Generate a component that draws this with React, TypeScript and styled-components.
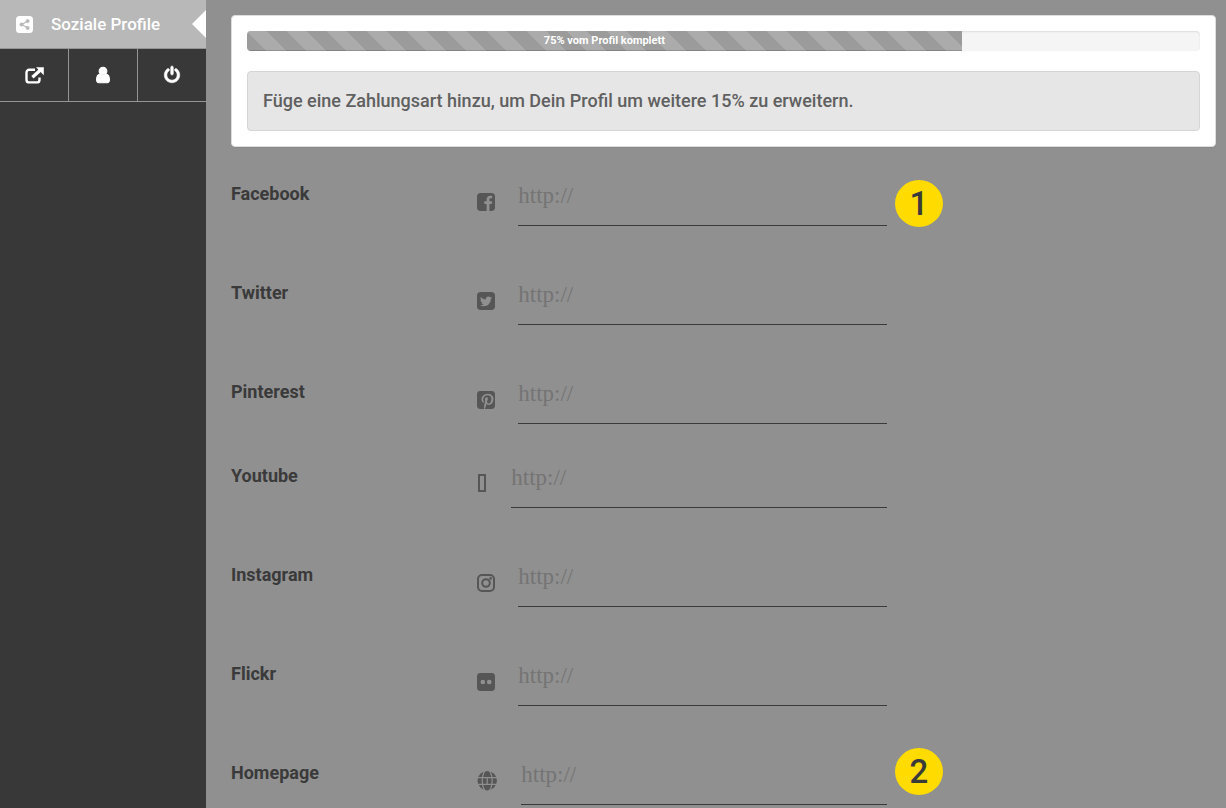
import React from "react";
import styled, { createGlobalStyle } from "styled-components";
import { FaPinterestP } from "react-icons/fa";

const GlobalStyle = createGlobalStyle`
  *, *::before, *::after { box-sizing: border-box; }
  body {
    margin: 0;
    background: #909090;
    font-family: Roboto, "Liberation Sans", sans-serif;
    color: #3a3a3a;
  }
`;

const Page = styled.div`
  display: flex;
  min-height: 100vh;
`;

const Sidebar = styled.aside`
  flex: 0 0 206px;
  background: #383838;
`;

const CurrentLink = styled.a`
  position: relative;
  display: flex;
  align-items: center;
  gap: 18px;
  height: 48px;
  padding: 0 16px;
  background: #b8b8b8;
  color: #fff;
  font-size: 17px;
  font-weight: 500;
  line-height: 24px;
  text-decoration: none;

  &::after {
    content: "";
    position: absolute;
    top: 10px;
    right: 0;
    border: solid transparent;
    border-width: 14px 14px 14px 0;
    border-right-color: #fff;
  }
`;

const Tools = styled.nav`
  display: flex;
  border: solid #959595;
  border-width: 1px 0;
`;

const Tool = styled.button`
  display: flex;
  flex: 1;
  align-items: center;
  justify-content: center;
  height: 52px;
  padding: 0;
  border: 0;
  background: none;
  color: #fff;
  cursor: pointer;

  &:not(:last-child) {
    border-right: 1px solid #959595;
  }
`;

const Main = styled.main`
  flex: 1;
  min-width: 0;
  padding: 15px 10px 3px 25px;
`;

const Card = styled.section`
  padding: 15px;
  margin-bottom: 30px;
  border: 1px solid #ddd;
  border-radius: 4px;
  background: #fff;
  box-shadow: 0 1px 1px rgba(0, 0, 0, 0.05);
`;

const Track = styled.div`
  height: 20px;
  margin-bottom: 20px;
  overflow: hidden;
  border-radius: 4px;
  background: #f5f5f5;
  box-shadow: inset 0 1px 2px rgba(0, 0, 0, 0.1);
`;

const Bar = styled.div`
  height: 100%;
  background-color: #9b9b9b;
  background-image: linear-gradient(
    45deg,
    rgba(255, 255, 255, 0.16) 25%,
    transparent 25%,
    transparent 50%,
    rgba(255, 255, 255, 0.16) 50%,
    rgba(255, 255, 255, 0.16) 75%,
    transparent 75%,
    transparent
  );
  background-size: 40px 40px;
  box-shadow: inset 0 -1px 0 rgba(0, 0, 0, 0.15);
  color: #fff;
  font-size: 11px;
  font-weight: 700;
  line-height: 20px;
  text-align: center;
`;

const Notice = styled.p`
  margin: 0;
  padding: 17px 15px;
  border: 1px solid #d5d5d5;
  border-radius: 4px;
  background: #e6e6e6;
  color: #606060;
  font-size: 18px;
  font-weight: 500;
  line-height: 24px;
`;

const Row = styled.div<{ $tight?: boolean }>`
  display: grid;
  grid-template-columns: 25% 41.6% 1fr;
  margin-bottom: ${(p) => (p.$tight ? 35 : 50)}px;

  &:last-child {
    margin-bottom: 0;
  }
`;

const Label = styled.label`
  padding-top: 5px;
  font-size: 18px;
  font-weight: 700;
  line-height: 24px;
`;

const Field = styled.div`
  position: relative;
  display: flex;
  gap: 23px;
`;

const IconSlot = styled.span`
  display: flex;
  flex: none;
  align-items: center;
  color: #565656;
`;

const UrlInput = styled.input`
  flex: 1;
  min-width: 0;
  height: 49px;
  padding: 0 0 10px;
  border: 0;
  border-bottom: 1px solid #3a3a3a;
  outline: 0;
  background: transparent;
  color: #3a3a3a;
  font: 23px/28px "Liberation Serif", serif;

  &::placeholder {
    color: #747474;
    opacity: 1;
  }
`;

const Badge = styled.span<{ $raised?: boolean }>`
  position: absolute;
  top: ${(p) => (p.$raised ? -8 : 3)}px;
  left: calc(100% + 8px);
  width: 48px;
  height: 47px;
  border-radius: 50%;
  background: #ffdb00;
  color: #3a3a3a;
  font-size: 33px;
  font-weight: 500;
  line-height: 48px;
  text-align: center;
`;

const Glyph = ({ d, size = 20, bold = 0 }: { d: string; size?: number; bold?: number }) => (
  <svg
    width={size}
    height={size}
    viewBox="0 0 1792 1792"
    fill="currentColor"
    stroke="currentColor"
    strokeWidth={bold}
    overflow="visible"
    aria-hidden="true"
  >
    <path d={d} />
  </svg>
);

const USER =
  "M1536 1399q0 109-62.5 187t-150.5 78h-854q-88 0-150.5-78t-62.5-187q0-85 8.5-160.5t31.5-152 58.5-131 94-89 134.5-34.5q131 128 313 128t313-128q76 0 134.5 34.5t94 89 58.5 131 31.5 152 8.5 160.5zM1280 512q0 159-112.5 271.5t-271.5 112.5-271.5-112.5-112.5-271.5 112.5-271.5 271.5-112.5 271.5 112.5 112.5 271.5z";
const POWER =
  "M1664 896q0 156-61 298t-164 245-245 164-298 61-298-61-245-164-164-245-61-298q0-182 80.5-343t226.5-270q43-32 95.5-25t83.5 50q32 42 24.5 94.5t-49.5 84.5q-98 74-151.5 181t-53.5 228q0 104 40.5 198.5t109.5 163.5 163.5 109.5 198.5 40.5 198.5-40.5 163.5-109.5 109.5-163.5 40.5-198.5q0-121-53.5-228t-151.5-181q-42-32-49.5-84.5t24.5-94.5q31-43 84-50t95 25q146 109 226.5 270t80.5 343zM1024 128v640q0 52-38 90t-90 38-90-38-38-90v-640q0-52 38-90t90-38 90 38 38 90z";
const FACEBOOK =
  "M1376 128q119 0 203.5 84.5t84.5 203.5v960q0 119-84.5 203.5t-203.5 84.5h-188v-595h199l30-232h-229v-148q0-56 23.5-84t91.5-28l122-1v-207q-63-9-178-9-136 0-217.5 80t-81.5 226v171h-200v232h200v595h-532q-119 0-203.5-84.5t-84.5-203.5v-960q0-119 84.5-203.5t203.5-84.5h960z";
const TWITTER =
  "M1408 610q-56 25-121 34 68-40 93-117-65 38-134 51-61-66-153-66-87 0-148.5 61.5t-61.5 148.5q0 29 5 48-129-7-242-65t-192-155q-29 50-29 106 0 114 91 175-47-1-100-26v2q0 75 50 133.5t123 72.5q-29 8-51 8-13 0-39-4 21 63 74.5 104t121.5 42q-116 90-261 90-26 0-50-3 148 94 322 94 112 0 210-35.5t168-95 120.5-137 75-162 24.5-168.5q0-18-1-27 63-45 105-109zm256-194v960q0 119-84.5 203.5t-203.5 84.5h-960q-119 0-203.5-84.5t-84.5-203.5v-960q0-119 84.5-203.5t203.5-84.5h960q119 0 203.5 84.5t84.5 203.5z";

/* Social icons share an 18px rounded tile. */
const Tile = ({
  children,
  viewBox = "0 0 18 18",
  plain = false,
}: {
  children: React.ReactNode;
  viewBox?: string;
  plain?: boolean;
}) => (
  <svg width="18" height="18" viewBox={viewBox} fill="currentColor" aria-hidden="true">
    {!plain && <rect width="18" height="18" rx="3.4" />}
    {children}
  </svg>
);

const FONT_BOX = "128 128 1536 1536";

const ShareIcon = () => (
  <svg width="17" height="17" viewBox="0 0 18 18" aria-hidden="true">
    <rect width="18" height="18" rx="3.8" fill="currentColor" />
    <g fill="#b8b8b8" stroke="#b8b8b8">
      <path d="M12.3 5.5 6 9l6.3 3.5" fill="none" strokeWidth="1.3" />
      <circle cx="12.3" cy="5.4" r="1.6" />
      <circle cx="5.8" cy="9" r="1.6" />
      <circle cx="12.3" cy="12.6" r="1.6" />
    </g>
  </svg>
);

const ExternalIcon = () => (
  <svg width="19" height="17" viewBox="0 0 19 17" fill="none" stroke="currentColor" aria-hidden="true">
    <path d="M10 2.7H4.2A2.7 2.7 0 0 0 1.5 5.4v7.3a2.7 2.7 0 0 0 2.7 2.7h7.6a2.7 2.7 0 0 0 2.7-2.7v-2.2" strokeWidth="2.4" />
    <path d="m7.4 10.3 7.8-7.1" strokeWidth="3.2" />
    <path d="M11 .3h7.8v7.9z" fill="currentColor" stroke="none" />
  </svg>
);

const PinterestIcon = () => (
  <Tile>
    <FaPinterestP x="2.5" y="2.5" width="13" height="13" color="#909090" />
  </Tile>
);

const InstagramIcon = () => (
  <Tile plain>
    <g fill="none" stroke="currentColor">
      <rect x="1" y="1" width="16" height="16" rx="4" strokeWidth="2" />
      <circle cx="9" cy="9" r="3.8" strokeWidth="2" />
    </g>
    <circle cx="13.6" cy="4.4" r="1.3" />
  </Tile>
);

const FlickrIcon = () => (
  <Tile>
    <g fill="#909090">
      <circle cx="5.8" cy="9" r="2.3" />
      <circle cx="12.2" cy="9" r="2.3" />
    </g>
  </Tile>
);

const BoxIcon = () => (
  <svg width="11" height="22" viewBox="0 0 11 22" fill="none" aria-hidden="true">
    <rect x="2" y="2" width="6" height="16" stroke="currentColor" strokeWidth="2" />
  </svg>
);

const GlobeIcon = () => (
  <svg width="21" height="20" viewBox="0 0 21 20" aria-hidden="true">
    <circle cx="10.2" cy="9.7" r="9.7" fill="currentColor" />
    <g fill="none" stroke="#909090" strokeWidth="1.2">
      <ellipse cx="10.2" cy="9.7" rx="5" ry="11" />
      <path d="M0 6.6h21M0 13.4h21M10.2 6.6v6.8" />
    </g>
  </svg>
);

type Profile = {
  name: string;
  icon: React.ReactNode;
  tight?: boolean;
  badge?: string;
  raised?: boolean;
};

const profiles: Profile[] = [
  {
    name: "Facebook",
    icon: <Tile plain viewBox={FONT_BOX}><path d={FACEBOOK} /></Tile>,
    badge: "1",
  },
  { name: "Twitter", icon: <Tile plain viewBox={FONT_BOX}><path d={TWITTER} /></Tile> },
  { name: "Pinterest", icon: <PinterestIcon />, tight: true },
  { name: "Youtube", icon: <BoxIcon /> },
  { name: "Instagram", icon: <InstagramIcon /> },
  { name: "Flickr", icon: <FlickrIcon /> },
  { name: "Homepage", icon: <GlobeIcon />, badge: "2", raised: true },
];

export default function App() {
  return (
    <>
      <GlobalStyle />
      <Page>
        <Sidebar>
          <CurrentLink href="#profile">
            <ShareIcon />
            Soziale Profile
          </CurrentLink>
          <Tools>
            <Tool type="button" aria-label="Seite öffnen">
              <ExternalIcon />
            </Tool>
            <Tool type="button" aria-label="Konto">
              <Glyph d={USER} size={18} bold={110} />
            </Tool>
            <Tool type="button" aria-label="Abmelden">
              <Glyph d={POWER} size={18} bold={60} />
            </Tool>
          </Tools>
        </Sidebar>
        <Main>
          <Card>
            <Track>
              <Bar style={{ width: "75%" }}>75% vom Profil komplett</Bar>
            </Track>
            <Notice>Füge eine Zahlungsart hinzu, um Dein Profil um weitere 15% zu erweitern.</Notice>
          </Card>
          <form>
            {profiles.map((p) => {
              const id = p.name.toLowerCase();
              return (
                <Row key={id} $tight={p.tight}>
                  <Label htmlFor={id}>{p.name}</Label>
                  <Field>
                    <IconSlot>{p.icon}</IconSlot>
                    <UrlInput id={id} type="url" placeholder="http://" />
                    {p.badge && <Badge $raised={p.raised}>{p.badge}</Badge>}
                  </Field>
                </Row>
              );
            })}
          </form>
        </Main>
      </Page>
    </>
  );
}
